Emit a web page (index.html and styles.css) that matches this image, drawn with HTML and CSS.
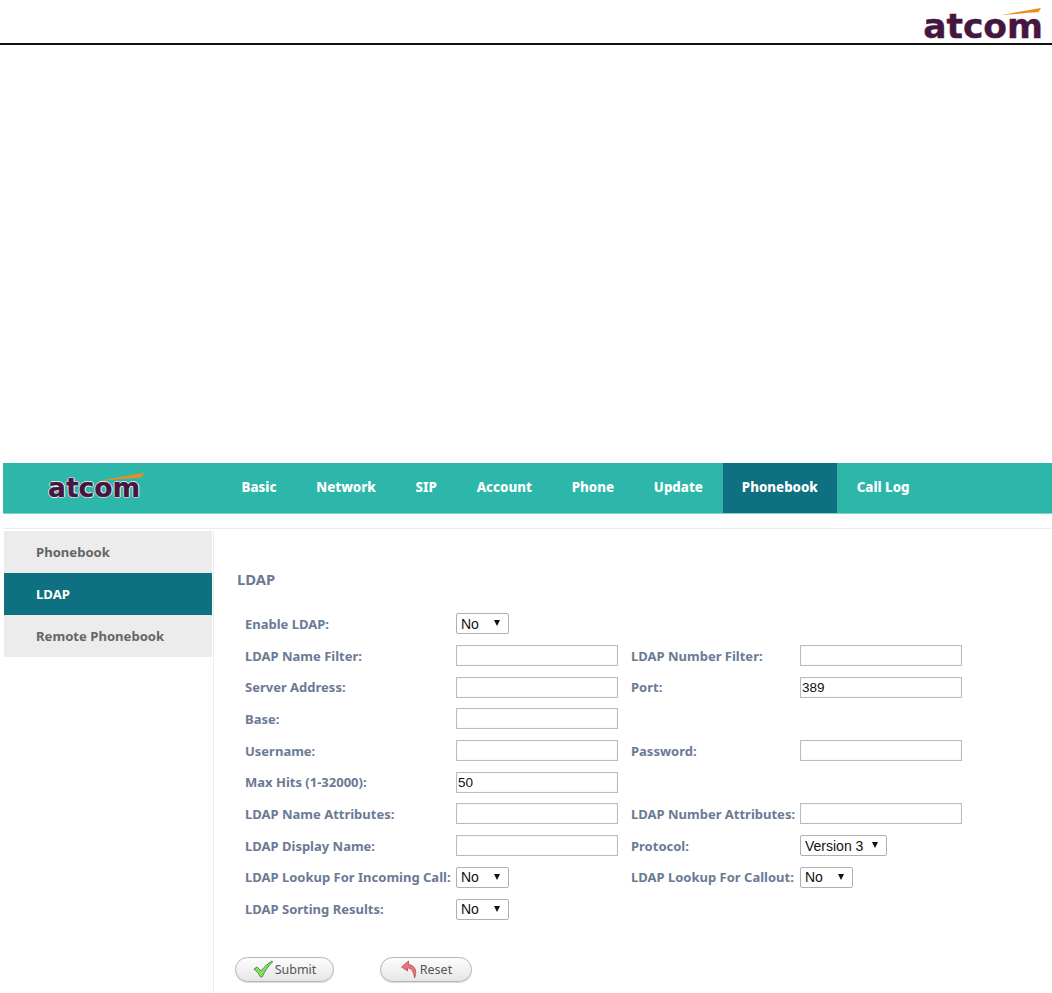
FILE: index.html
```html
<!DOCTYPE html>
<html lang="en">
<head>
  <meta charset="UTF-8" />
  <title>LDAP – atcom</title>
  <meta name="viewport" content="width=device-width, initial-scale=1" />
  <link rel="stylesheet" href="styles.css">
</head>
<body>

  <header class="doc-head">
    <div class="brand brand-doc">
      <svg class="swoosh" viewBox="0 0 50 10" aria-hidden="true"><path d="M0 9 C14 6 32 3 50 0 L47 5 C32 6 14 8 0 9 Z" fill="#f08a1d"/></svg>
      <span class="brand-text">atcom</span>
    </div>
  </header>

  <nav class="topnav">
    <div class="brand brand-nav">
      <svg class="swoosh" viewBox="0 0 50 10" aria-hidden="true"><path d="M0 9 C14 6 32 3 50 0 L47 5 C32 6 14 8 0 9 Z" fill="#f08a1d"/></svg>
      <span class="brand-text">atcom</span>
    </div>
    <a class="nav-item">Basic</a>
    <a class="nav-item">Network</a>
    <a class="nav-item">SIP</a>
    <a class="nav-item">Account</a>
    <a class="nav-item">Phone</a>
    <a class="nav-item">Update</a>
    <a class="nav-item active">Phonebook</a>
    <a class="nav-item">Call Log</a>
  </nav>

  <div class="page">
    <aside class="sidebar">
      <a class="side-item">Phonebook</a>
      <a class="side-item active">LDAP</a>
      <a class="side-item">Remote Phonebook</a>
    </aside>

    <main class="content">
      <h2 class="section-title">LDAP</h2>

      <form class="ldap-form">
        <label>Enable LDAP:</label>
        <span class="pick"><select class="w-no"><option>No</option></select></span>
        <span></span><span></span>

        <label>LDAP Name Filter:</label>
        <input type="text" />
        <label>LDAP Number Filter:</label>
        <input type="text" />

        <label>Server Address:</label>
        <input type="text" />
        <label>Port:</label>
        <input type="text" value="389" />

        <label>Base:</label>
        <input type="text" />
        <span></span><span></span>

        <label>Username:</label>
        <input type="text" />
        <label>Password:</label>
        <input type="text" />

        <label>Max Hits (1-32000):</label>
        <input type="text" value="50" />
        <span></span><span></span>

        <label>LDAP Name Attributes:</label>
        <input type="text" />
        <label>LDAP Number Attributes:</label>
        <input type="text" />

        <label>LDAP Display Name:</label>
        <input type="text" />
        <label>Protocol:</label>
        <span class="pick"><select class="w-version"><option>Version 3</option></select></span>

        <label>LDAP Lookup For Incoming Call:</label>
        <span class="pick"><select class="w-no"><option>No</option></select></span>
        <label>LDAP Lookup For Callout:</label>
        <span class="pick"><select class="w-no"><option>No</option></select></span>

        <label>LDAP Sorting Results:</label>
        <span class="pick"><select class="w-no"><option>No</option></select></span>
        <span></span><span></span>
      </form>

      <div class="actions">
        <button type="button" class="btn btn-submit">
          <svg width="20" height="18" viewBox="0 0 20 18" aria-hidden="true"><path d="M1 9 L4 7 L8 11 C11 7 15 3.500 19 1 L19.500 2 C15 6 12 11 9 17 L7.500 17 C6 14 4 11 1 9 Z" fill="#8fd96a" stroke="#3e9a3a" stroke-width="1"/></svg>
          Submit
        </button>
        <button type="button" class="btn btn-reset">
          <svg width="18" height="19" viewBox="0 0 17 19" aria-hidden="true"><path d="M8 1 L1 7 L7 11 L7 8 C11 8 13 11 14 18 C16.500 12 15.500 5.500 8 4.500 Z" fill="#e8757a" stroke="#b9484e" stroke-width="0.8"/></svg>
          Reset
        </button>
      </div>
    </main>
  </div>

</body>
</html>
```

FILE: styles.css
```css
html, body {
  margin: 0;
  padding: 0;
  height: 993px;
  overflow: hidden;
  background: #fff;
  font-family: "Noto Sans", "Open Sans", sans-serif;
}

/* document header with rule */
.doc-head {
  height: 43px;
  border-bottom: 2px solid #111;
  display: flex;
  justify-content: flex-end;
  align-items: flex-end;
  padding-right: 9px;
}

.brand {
  position: relative;
  font-family: "DejaVu Sans", sans-serif;
  font-weight: 700;
  color: #45163f;
  line-height: 1;
  -webkit-text-stroke: 0.4px #45163f;
}

.brand-doc {
  font-size: 34.500px;
  margin-bottom: 0;
}

.brand-doc .swoosh {
  position: absolute;
  right: -3px;
  top: -1px;
  width: 50px;
  height: 8px;
}

.brand-nav {
  font-size: 26.500px;
  width: 174px;
  padding-left: 45px;
  text-shadow: 1px 0 0 #fff, -1px 0 0 #fff, 0 1px 0 #fff, 0 -1px 0 #fff;
}

.brand-nav .swoosh {
  position: absolute;
  left: 95px;
  top: -2px;
  width: 47px;
  height: 9px;
}

.brand-text {
  display: block;
}

/* top menu */
.topnav {
  margin: 418px 0 0 3px;
  height: 50px;
  background: #2db7aa;
  display: flex;
  align-items: center;
  border-bottom: 1px solid #7fd3cb;
}

.nav-item {
  height: 100%;
  box-sizing: border-box;
  display: flex;
  align-items: center;
  padding: 0 19.900px 2px;
  color: #fff;
  font-size: 13.300px;
  font-weight: 800;
}

.nav-item:first-of-type {
  padding-left: 19.500px;
}

.nav-item.active {
  padding: 0 19px 2px;
  background: #0e7080;
}

/* body below the menu */
.page {
  display: flex;
  margin: 14px 0 0 3px;
  border-top: 1px solid #ececec;
  padding-top: 2px;
  height: 462px;
}

.sidebar {
  width: 208px;
  margin-left: 1px;
  margin-right: 1px;
  flex-shrink: 0;
}

.side-item {
  display: flex;
  align-items: center;
  height: 42px;
  padding-left: 32px;
  background: #ececec;
  color: #666;
  font-size: 13.100px;
  font-weight: 700;
}

.side-item.active {
  background: #0e7080;
  color: #fff;
}

.content {
  flex: 1;
  border-left: 1px solid #eee;
  padding: 40px 0 0 23px;
}

.section-title {
  margin: 0 0 21px;
  font-size: 14.800px;
  line-height: 16px;
  font-weight: 700;
  color: #6b7a94;
}

.ldap-form {
  display: grid;
  grid-template-columns: 211px 175px 169px 162px;
  grid-auto-rows: 31.700px;
  align-items: center;
  margin-left: 8px;
}

.ldap-form label {
  font-size: 13px;
  font-weight: 700;
  color: #6b7a94;
  white-space: nowrap;
}

.ldap-form input {
  width: 162px;
  height: 21px;
  box-sizing: border-box;
  border: 1px solid #bcbcbc;
  box-shadow: inset 0 0 1px #ccc;
  padding: 0 1px;
  margin: 0;
  font-family: "Liberation Sans", sans-serif;
  font-size: 13.500px;
  color: #111;
  background: #fff;
}

.pick {
  position: relative;
  display: inline-block;
  justify-self: start;
  height: 21px;
}

.pick::after {
  content: "";
  position: absolute;
  right: 9px;
  top: 7px;
  border-left: 3.500px solid transparent;
  border-right: 3.500px solid transparent;
  border-top: 6px solid #111;
}

.pick select {
  appearance: none;
  display: block;
  height: 21px;
  box-sizing: border-box;
  border: 1px solid #b0b0b0;
  border-radius: 2px;
  background: #fff;
  padding: 0 0 0 4px;
  margin: 0;
  font-family: "Liberation Sans", sans-serif;
  font-size: 14px;
  color: #111;
}

.w-no {
  width: 53px;
}

.w-version {
  width: 87px;
}

.actions {
  display: flex;
  gap: 46px;
  margin-top: 32px;
  margin-left: -2px;
}

.btn {
  height: 25px;
  border: 1px solid #b5b5b5;
  border-radius: 13px;
  background: linear-gradient(#fdfdfd, #e6e6e6);
  box-shadow: 0 1px 1px rgba(0, 0, 0, 0.15);
  display: flex;
  align-items: center;
  justify-content: center;
  gap: 2px;
  padding: 0;
  font-family: "Noto Sans", sans-serif;
  font-size: 12.500px;
  color: #555;
}

.btn-submit {
  width: 99px;
}

.btn-reset {
  width: 92px;
}
```
